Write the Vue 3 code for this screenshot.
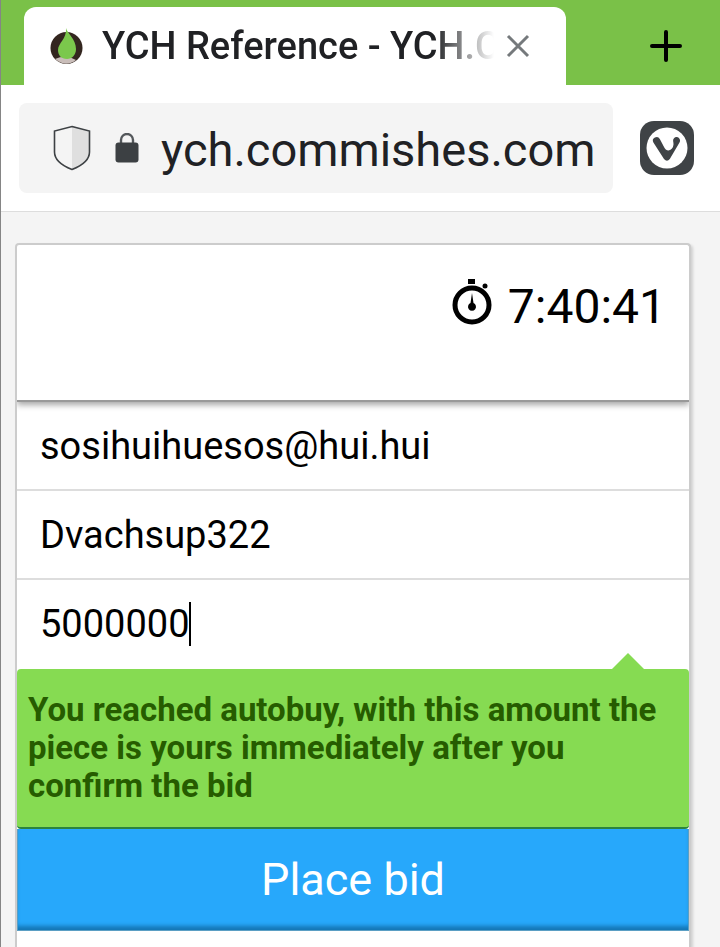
<script setup>
import { ref, computed } from 'vue'

const url = ref('ych.commishes.com')
const timeLeft = ref('7:40:41')
const email = ref('sosihuihuesos@hui.hui')
const nickname = ref('Dvachsup322')
const bid = ref('5000000')

// all digits are one ch wide, so the caret can follow the amount
const caretStyle = computed(() => ({ marginLeft: `${bid.value.length}ch` }))
</script>

<template>
  <div class="browser">
    <header>
      <nav class="tab-bar">
        <div class="tab">
          <svg class="favicon" viewBox="0 0 34 38" aria-hidden="true">
            <circle cx="16.500" cy="21" r="16" fill="#33261f" />
            <path d="M5 32 Q16 27 26 33 Q16 41 5 32Z" fill="#c9bdb9" />
            <path d="M16 1 C17 6 26 12 26 22 C26 28 22 32 17 32 C11 32 8 28 8 23 C8 16 17 12 16 1Z" fill="#7bc84c" />
          </svg>
          <a class="tab-title" href="#">YCH Reference - YCH.C</a>
          <button class="close" type="button" aria-label="Close tab">
            <svg viewBox="0 0 24 24"><path d="M2 2 L22 22 M22 2 L2 22" /></svg>
          </button>
        </div>
        <button class="new-tab" type="button" aria-label="New tab">
          <svg viewBox="0 0 32 32"><path d="M16 2 V30 M2 16 H30" /></svg>
        </button>
      </nav>

      <div class="toolbar">
        <div class="address">
          <svg class="shield" viewBox="0 0 38 46" aria-hidden="true">
            <path d="M19 1 L37 6 V26 C37 35 28 41 19 45 C10 41 1 35 1 26 V6Z" fill="#f4f4f4" />
            <path d="M19 1 L37 6 V26 C37 35 28 41 19 45Z" fill="#dfdfdf" />
            <path d="M19 1.5 L36.5 6 V27 C36.5 35 28 41 19 44.5 C10 41 1.5 35 1.5 27 V6Z" fill="none" stroke="#3d4144" stroke-width="1.600" />
          </svg>
          <svg class="lock" viewBox="0 0 24 30" aria-hidden="true">
            <path d="M6 12 V7 a5.500 5.500 0 0 1 12 0 V12" fill="none" stroke="#54585b" stroke-width="2.400" />
            <rect x="0.500" y="9.500" width="23" height="20" rx="3" fill="#3c4043" />
          </svg>
          <input v-model="url" class="url" type="text" aria-label="Address" />
        </div>
        <button class="menu" type="button" aria-label="Vivaldi menu">
          <svg viewBox="0 0 54 54">
            <rect width="54" height="54" rx="14" fill="#3f4346" />
            <circle cx="27" cy="27" r="20.500" fill="#fff" />
            <path d="M13.400 21.500 A3.500 3.500 0 0 1 19.800 18 L23.500 25 Q25.500 29.500 28.500 29.500 Q33 28.500 33.500 23.500 Q33.500 22 33.200 20.500 A3.500 3.500 0 1 1 39.500 21.500 L29.800 38 Q27 41.500 24 38Z" fill="#3f4346" />
          </svg>
        </button>
      </div>
    </header>

    <main>
      <form class="card" @submit.prevent>
        <div class="timer">
          <svg viewBox="0 0 40 46" aria-hidden="true">
            <rect x="16" y="0" width="7" height="5" />
            <circle cx="33" cy="7" r="2.500" />
            <circle cx="20" cy="26" r="17" fill="none" stroke="#000" stroke-width="5" />
            <path d="M20 14 L21.500 24 A4 4 0 1 1 18.500 24Z" />
          </svg>
          <time>{{ timeLeft }}</time>
        </div>

        <div class="field">
          <input v-model="email" type="email" aria-label="Email" />
        </div>
        <div class="field">
          <input v-model="nickname" type="text" aria-label="Name" />
        </div>
        <div class="field amount">
          <input v-model="bid" type="text" inputmode="numeric" aria-label="Bid" />
          <span class="caret" :style="caretStyle"></span>
        </div>

        <p class="notice">
          You reached autobuy, with this amount the piece is yours immediately after you confirm the bid
        </p>
        <button class="submit" type="submit">Place bid</button>
      </form>
    </main>
  </div>
</template>

<style>
body {
  margin: 0;
}
</style>

<style scoped>
.browser {
  box-sizing: border-box;
  display: flex;
  flex-direction: column;
  min-height: 100vh;
  border-left: 1px solid #858585;
  background: #f4f4f4;
  color: #000;
  font-family: Roboto, 'Liberation Sans', sans-serif;
}

button,
input {
  margin: 0;
  padding: 0;
  border: none;
  outline: none;
  background: none;
  color: inherit;
  font-family: inherit;
}

svg {
  display: block;
  flex: none;
}

.tab-bar {
  display: flex;
  justify-content: space-between;
  padding: 7px 38px 0 23px;
  background: #7ac148;
}

.tab {
  box-sizing: border-box;
  display: flex;
  flex: 0 1 542px;
  align-items: center;
  min-width: 0;
  height: 78px;
  padding: 0 36px 0 26px;
  border-radius: 12px 12px 0 0;
  background: #fff;
}

.favicon {
  width: 34px;
  height: 38px;
}

.tab-title {
  flex: 1;
  min-width: 0;
  margin: 0 12px 0 18px;
  overflow: hidden;
  color: #202124;
  font-size: 38px;
  font-weight: 500;
  line-height: 48px;
  text-decoration: none;
  white-space: nowrap;
  mask-image: linear-gradient(to right, #000 calc(100% - 60px), transparent);
}

.close svg {
  width: 24px;
  height: 24px;
  fill: none;
  stroke: #75797c;
  stroke-width: 3;
}

.new-tab svg {
  width: 32px;
  height: 32px;
  fill: none;
  stroke: #000;
  stroke-width: 4;
  stroke-linecap: round;
}

.toolbar {
  display: flex;
  align-items: center;
  gap: 27px;
  padding: 18px 26px 18px 18px;
  border-bottom: 1px solid #ddd;
  background: #fff;
}

.address {
  box-sizing: border-box;
  display: flex;
  flex: 1;
  align-items: center;
  min-width: 0;
  height: 90px;
  padding: 0 16px 0 34px;
  border-radius: 8px;
  background: #f4f4f4;
}

.shield {
  width: 38px;
  height: 46px;
}

.lock {
  width: 24px;
  height: 30px;
  margin: 0 22px 0 24px;
}

.url {
  flex: 1;
  min-width: 0;
  height: 60px;
  padding-top: 2px;
  color: #202124;
  font-size: 47px;
}

.menu svg {
  width: 54px;
  height: 54px;
}

main {
  display: flex;
  flex: 1;
  padding: 31px 29px 0 14px;
}

.card {
  flex: 1;
  min-width: 0;
  overflow: hidden;
  border: 2px solid #ccc;
  border-bottom: none;
  border-radius: 4px 4px 0 0;
  background: #fff;
  box-shadow: 2px 2px 3px rgba(0, 0, 0, 0.15);
}

.timer {
  box-sizing: border-box;
  display: flex;
  align-items: flex-start;
  justify-content: flex-end;
  gap: 16px;
  height: 157px;
  padding: 34px 23px 0;
  border-bottom: 2px solid #999;
  box-shadow: 0 3px 6px rgba(0, 0, 0, 0.35);
  font-size: 48px;
  line-height: 56px;
}

.timer svg {
  width: 40px;
  height: 46px;
}

.field {
  box-sizing: border-box;
  display: flex;
  height: 89px;
  padding: 0 23px;
  border-bottom: 2px solid #ddd;
  font-size: 38px;
}

.field input {
  flex: 1;
  min-width: 0;
  font-size: 38px;
}

.amount {
  position: relative;
  border-bottom-color: transparent;
}

.amount input {
  caret-color: transparent;
}

.caret {
  position: absolute;
  top: 22px;
  left: 23px;
  width: 2px;
  height: 44px;
  background: #000;
}

.notice {
  position: relative;
  margin: 0;
  padding: 22px 24px 22px 11px;
  border-bottom: 2px solid #2b8340;
  border-radius: 4px;
  background: #86db52;
  color: #265c00;
  font-size: 33px;
  font-weight: 700;
  line-height: 38px;
}

.notice::before {
  content: '';
  position: absolute;
  right: 45px;
  bottom: 100%;
  border: 16px solid transparent;
  border-top: none;
  border-bottom-color: #86db52;
}

.submit {
  display: block;
  width: 100%;
  height: 102px;
  border: 1px solid #5b9fc4;
  border-top: none;
  background: #27a8fb;
  box-shadow: inset 0 -6px 4px -2px #1476b5;
  color: #fff;
  font-size: 45px;
}
</style>
